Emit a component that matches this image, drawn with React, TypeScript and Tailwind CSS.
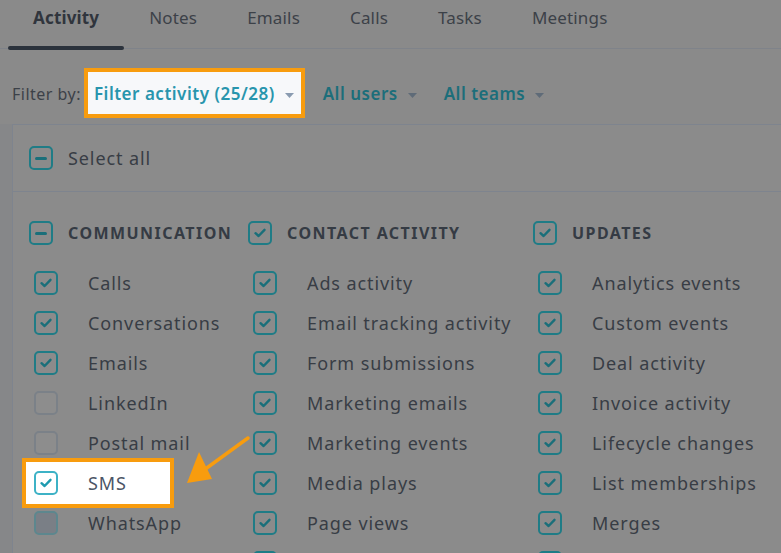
import React from "react";

type Item = { label: string; checked: boolean; hover?: boolean; highlight?: boolean };

const tabs = ["Activity", "Notes", "Emails", "Calls", "Tasks", "Meetings"];

const communication: Item[] = [
  { label: "Calls", checked: true },
  { label: "Conversations", checked: true },
  { label: "Emails", checked: true },
  { label: "LinkedIn", checked: false },
  { label: "Postal mail", checked: false },
  { label: "SMS", checked: true, highlight: true },
  { label: "WhatsApp", checked: false, hover: true },
];

// last row is cut by the bottom edge, only the box tops show
const contactActivity: Item[] = [
  { label: "Ads activity", checked: true },
  { label: "Email tracking activity", checked: true },
  { label: "Form submissions", checked: true },
  { label: "Marketing emails", checked: true },
  { label: "Marketing events", checked: true },
  { label: "Media plays", checked: true },
  { label: "Page views", checked: true },
  { label: "", checked: true },
];

const updates: Item[] = [
  { label: "Analytics events", checked: true },
  { label: "Custom events", checked: true },
  { label: "Deal activity", checked: true },
  { label: "Invoice activity", checked: true },
  { label: "Lifecycle changes", checked: true },
  { label: "List memberships", checked: true },
  { label: "Merges", checked: true },
  { label: "", checked: true },
];

function Check({ color }: { color: string }) {
  return (
    <svg width="14" height="14" viewBox="0 0 14 14" fill="none">
      <path d="M2.5 7.2 L5.6 10 L11.5 3.8" stroke={color} strokeWidth="2.4" strokeLinecap="round" strokeLinejoin="round" />
    </svg>
  );
}

function Box({ state, bright, hover }: { state: "on" | "off" | "mixed"; bright?: boolean; hover?: boolean }) {
  if (state === "off") {
    return (
      <span
        className={
          hover
            ? "flex h-6 w-6 shrink-0 rounded-[5px] border-2 border-[#5d878e] bg-[#7a7f86]"
            : "flex h-6 w-6 shrink-0 rounded-[5px] border-2 border-[#7b8188] bg-[#8d8d8d]"
        }
      />
    );
  }
  return (
    <span
      className={
        bright
          ? "flex h-6 w-6 shrink-0 items-center justify-center rounded-[5px] border-2 border-[#3db2c6] bg-white"
          : "flex h-6 w-6 shrink-0 items-center justify-center rounded-[5px] border-2 border-[#1f7c86] bg-[#8b8b8b]"
      }
    >
      {state === "on" ? (
        <Check color={bright ? "#1f9bb0" : "#1a6f7a"} />
      ) : (
        <span className="h-[3px] w-3 rounded-full bg-[#1a6f7a]" />
      )}
    </span>
  );
}

function Caret({ bright }: { bright?: boolean }) {
  return (
    <svg width="9" height="5" viewBox="0 0 9 5" className="ml-[10px] mt-[2px]">
      <path d="M0 0 L9 0 L4.5 5 Z" fill={bright ? "#8a9bb0" : "#5f6b78"} />
    </svg>
  );
}

function Column({
  title,
  state,
  items,
  width,
}: {
  title: string;
  state: "on" | "mixed";
  items: Item[];
  width: string;
}) {
  return (
    <div className={"flex shrink-0 flex-col " + width}>
      <div className="flex h-[44px] items-center gap-[15px]">
        <Box state={state} />
        <span className="text-[16px] font-bold uppercase tracking-[0.09em] text-[#353b44]">{title}</span>
      </div>
      <div className="mt-[8px] flex flex-col">
        {items.map((it, i) =>
          it.highlight ? (
            <div
              key={i}
              className="relative z-10 -my-[5px] -ml-[7px] flex h-[50px] w-[152px] items-center gap-[30px] border-4 border-[#f89c0e] bg-white pl-[8px]"
            >
              <Box state="on" bright />
              <span className="text-[18px] tracking-[0.05em] text-[#4b5566]">{it.label}</span>
            </div>
          ) : (
            <div key={i} className="flex h-[40px] items-center gap-[30px] pl-[5px]">
              <Box state={it.checked ? "on" : "off"} hover={it.hover} />
              {it.label && (
                <span className="whitespace-nowrap text-[18px] tracking-[0.05em] text-[#383d45]">{it.label}</span>
              )}
            </div>
          )
        )}
      </div>
    </div>
  );
}

export default function App() {
  return (
    <div
      className="relative h-[553px] w-[781px] overflow-hidden bg-[#868789] text-[#383d45]"
      style={{ fontFamily: "'Noto Sans', 'Open Sans', sans-serif" }}
    >
      {/* tabs */}
      <div className="flex h-[49px] border-b border-[#7f838a] bg-[#8a8a8a] pl-[8px]">
        {tabs.map((t, i) => (
          <div key={t} className="relative flex flex-col items-center px-[25px] pt-[5px]">
            <span
              className={
                i === 0
                  ? "text-[17px] font-bold tracking-[0.01em] text-[#30353d]"
                  : "text-[17px] tracking-[0.01em] text-[#3c4148]"
              }
            >
              {t}
            </span>
            {i === 0 && <span className="absolute bottom-[-2px] left-0 right-0 h-[4px] rounded-full bg-[#2b323c]" />}
          </div>
        ))}
      </div>

      {/* filter row */}
      <div className="flex h-[75px] items-start bg-[#8a8a8a] pl-[12px] pt-[19px]">
        <div className="flex h-[50px] items-center pt-[2px]">
          <span className="mr-[3px] text-[16px] tracking-[0.03em] text-[#3c4148]">Filter by:</span>
        </div>
        <div className="flex h-[50px] items-center border-4 border-[#f89c0e] bg-[#f7f8fa] pl-[6px] pr-[7px] pt-[2px]">
          <span className="text-[17px] font-semibold tracking-[0.03em] text-[#2895ad]">Filter activity (25/28)</span>
          <Caret bright />
        </div>
        <div className="ml-[18px] flex h-[50px] items-center pt-[2px]">
          <span className="text-[17px] font-semibold tracking-[0.03em] text-[#1c6e7a]">All users</span>
          <Caret />
        </div>
        <div className="ml-[27px] flex h-[50px] items-center pt-[2px]">
          <span className="text-[17px] font-semibold tracking-[0.03em] text-[#1c6e7a]">All teams</span>
          <Caret />
        </div>
      </div>

      {/* panel */}
      <div className="ml-[12px] border-l border-t border-[#7e848e] bg-[#8b8b8b]">
        <div className="flex h-[67px] items-center gap-[15px] border-b border-[#7e848e] pl-[16px]">
          <Box state="mixed" />
          <span className="text-[18px] tracking-[0.05em] text-[#383d45]">Select all</span>
        </div>
        <div className="flex pl-[16px] pt-[19px]">
          <Column title="Communication" state="mixed" items={communication} width="w-[219px]" />
          <Column title="Contact activity" state="on" items={contactActivity} width="w-[285px]" />
          <Column title="Updates" state="on" items={updates} width="w-[260px]" />
        </div>
      </div>

      {/* arrow annotation */}
      <svg className="pointer-events-none absolute left-0 top-0 z-20" width="781" height="553">
        <line x1="248" y1="438" x2="204" y2="470" stroke="#f89c0e" strokeWidth="3.5" strokeLinecap="round" />
        <polygon points="187,483 199,452 212,479" fill="#f89c0e" />
      </svg>
    </div>
  );
}
